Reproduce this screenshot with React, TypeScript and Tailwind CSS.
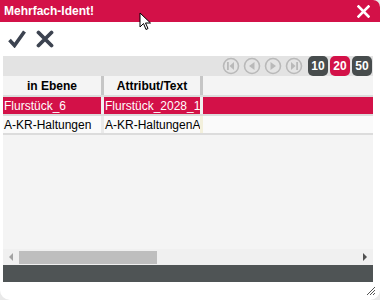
import React from "react";

const Circ = ({ kind }: { kind: "first" | "prev" | "next" | "last" }) => (
  <svg width="18" height="18" viewBox="0 0 18 18">
    <circle cx="9" cy="9" r="7.5" fill="#e4e4e4" stroke="#b9b9b9" strokeWidth="1.6" />
    {kind === "first" && (
      <g fill="#b9b9b9">
        <rect x="5" y="5" width="1.8" height="8" />
        <polygon points="12,5 12,13 7.5,9" />
      </g>
    )}
    {kind === "prev" && <polygon points="11.5,5 11.5,13 6,9" fill="#b9b9b9" />}
    {kind === "next" && <polygon points="6.5,5 6.5,13 12,9" fill="#b9b9b9" />}
    {kind === "last" && (
      <g fill="#b9b9b9">
        <polygon points="6,5 6,13 10.5,9" />
        <rect x="11.2" y="5" width="1.8" height="8" />
      </g>
    )}
  </svg>
);

export default function App() {
  return (
    <div
      className="w-[380px] h-[300px] bg-[#e9e9e9] relative overflow-hidden"
      style={{ fontFamily: '"Liberation Sans", Arial, sans-serif' }}
    >
      <div className="w-[380px] h-[300px] bg-white rounded-tr-[7px] rounded-bl-[10px] rounded-br-[10px] flex flex-col overflow-hidden">
        {/* Title bar */}
        <div className="h-[22px] bg-[#d31148] flex items-center justify-between pl-[4px] pr-[10px] shrink-0">
          <span className="text-white font-bold text-[12px] leading-none">Mehrfach-Ident!</span>
          <svg width="13" height="13" viewBox="0 0 13 13">
            <path d="M1.5 1.5 L11.5 11.5 M11.5 1.5 L1.5 11.5" stroke="#fff" strokeWidth="2.6" strokeLinecap="square" />
          </svg>
        </div>
        {/* Action icons */}
        <div className="h-[34px] flex items-center gap-[10px] pl-[8px] shrink-0">
          <svg width="18" height="18" viewBox="0 0 18 18">
            <path d="M1.5 10 L6.5 15.5 L16.5 1.5" fill="none" stroke="#3c4350" strokeWidth="3.6" strokeLinejoin="miter" />
          </svg>
          <svg width="18" height="18" viewBox="0 0 18 18">
            <path d="M2.5 2.5 L15.5 15.5 M15.5 2.5 L2.5 15.5" stroke="#3c4350" strokeWidth="3.8" strokeLinecap="round" />
          </svg>
        </div>
        {/* Panel */}
        <div className="mx-[3px] w-[370px] flex flex-col flex-1 min-h-0">
          {/* pager */}
          <div className="h-[20px] bg-[#e3e3e3] flex items-center justify-end gap-[2px] pr-[1px] shrink-0">
            <div className="flex items-center gap-[3px] mr-[3px]">
              <Circ kind="first" />
              <Circ kind="prev" />
              <Circ kind="next" />
              <Circ kind="last" />
            </div>
            <div className="w-[20px] h-[20px] rounded-[5px] bg-[#474c4d] text-white font-bold text-[12px] flex items-center justify-center">10</div>
            <div className="w-[20px] h-[20px] rounded-[5px] bg-[#d31148] text-white font-bold text-[12px] flex items-center justify-center">20</div>
            <div className="w-[20px] h-[20px] rounded-[5px] bg-[#474c4d] text-white font-bold text-[12px] flex items-center justify-center">50</div>
          </div>
          {/* grid */}
          <div className="flex-1 bg-[#f4f4f4] flex flex-col min-h-0">
            <div className="h-[21px] flex bg-[#f4f4f4] border-b-[2px] border-[#dcdcdc] shrink-0">
              <div className="w-[98px] flex items-center justify-center font-bold text-[12px] text-black">in Ebene</div>
              <div className="w-[3px] bg-[#c6c6c6]" />
              <div className="w-[96px] flex items-center justify-center font-bold text-[12px] text-black">Attribut/Text</div>
              <div className="w-[3px] bg-[#c6c6c6]" />
              <div className="flex-1" />
            </div>
            <div className="h-[19px] flex bg-[#d31148] border-b-[2px] border-[#dcdcdc] shrink-0">
              <div className="w-[98px] px-[1px] flex items-center text-[12px] text-white overflow-hidden whitespace-nowrap">Flurstück_6</div>
              <div className="w-[3px] bg-[#f0f0f0]" />
              <div className="w-[96px] px-[1px] flex items-center text-[12px] text-white overflow-hidden whitespace-nowrap">Flurstück_2028_1999</div>
              <div className="w-[3px] bg-[#f0f0f0]" />
              <div className="flex-1" />
            </div>
            <div className="h-[19px] flex bg-[#fafafa] border-b-[2px] border-[#dcdcdc] shrink-0">
              <div className="w-[98px] px-[1px] flex items-center text-[12px] text-black overflow-hidden whitespace-nowrap">A-KR-Haltungen</div>
              <div className="w-[3px] bg-[#eaeaea]" />
              <div className="w-[96px] px-[1px] flex items-center text-[12px] text-black overflow-hidden whitespace-nowrap">A-KR-HaltungenA</div>
              <div className="w-[3px] bg-[#f3f0dc]" />
              <div className="flex-1" />
            </div>
            <div className="flex-1" />
            {/* scrollbar */}
            <div className="h-[16px] bg-[#f0f0f0] flex items-center shrink-0">
              <div className="w-[16px] flex items-center justify-center">
                <svg width="6" height="8" viewBox="0 0 6 8"><polygon points="5,0 5,8 1,4" fill="#a3a3a3" /></svg>
              </div>
              <div className="w-[138px] h-[13px] bg-[#bebebe]" />
              <div className="flex-1" />
              <div className="w-[16px] flex items-center justify-center">
                <svg width="6" height="8" viewBox="0 0 6 8"><polygon points="1,0 1,8 5,4" fill="#505050" /></svg>
              </div>
            </div>
          </div>
          {/* footer */}
          <div className="h-[17px] bg-[#4f5455] shrink-0" />
          <div className="h-[18px] shrink-0" />
        </div>
      </div>
      {/* resize grip */}
      <svg className="absolute right-[4px] bottom-[4px]" width="10" height="10" viewBox="0 0 10 10">
        <path d="M9 1 L1 9 M9 4 L4 9 M9 7 L7 9" stroke="#555" strokeWidth="1" />
      </svg>
      {/* mouse cursor */}
      <svg className="absolute left-[139px] top-[12px]" width="14" height="20" viewBox="0 0 14 20">
        <path d="M1 1 L1 15 L4.5 11.5 L7 17.5 L9 16.5 L6.5 11 L11.5 11 Z" fill="#fff" stroke="#000" strokeWidth="1" strokeLinejoin="round" />
      </svg>
    </div>
  );
}
